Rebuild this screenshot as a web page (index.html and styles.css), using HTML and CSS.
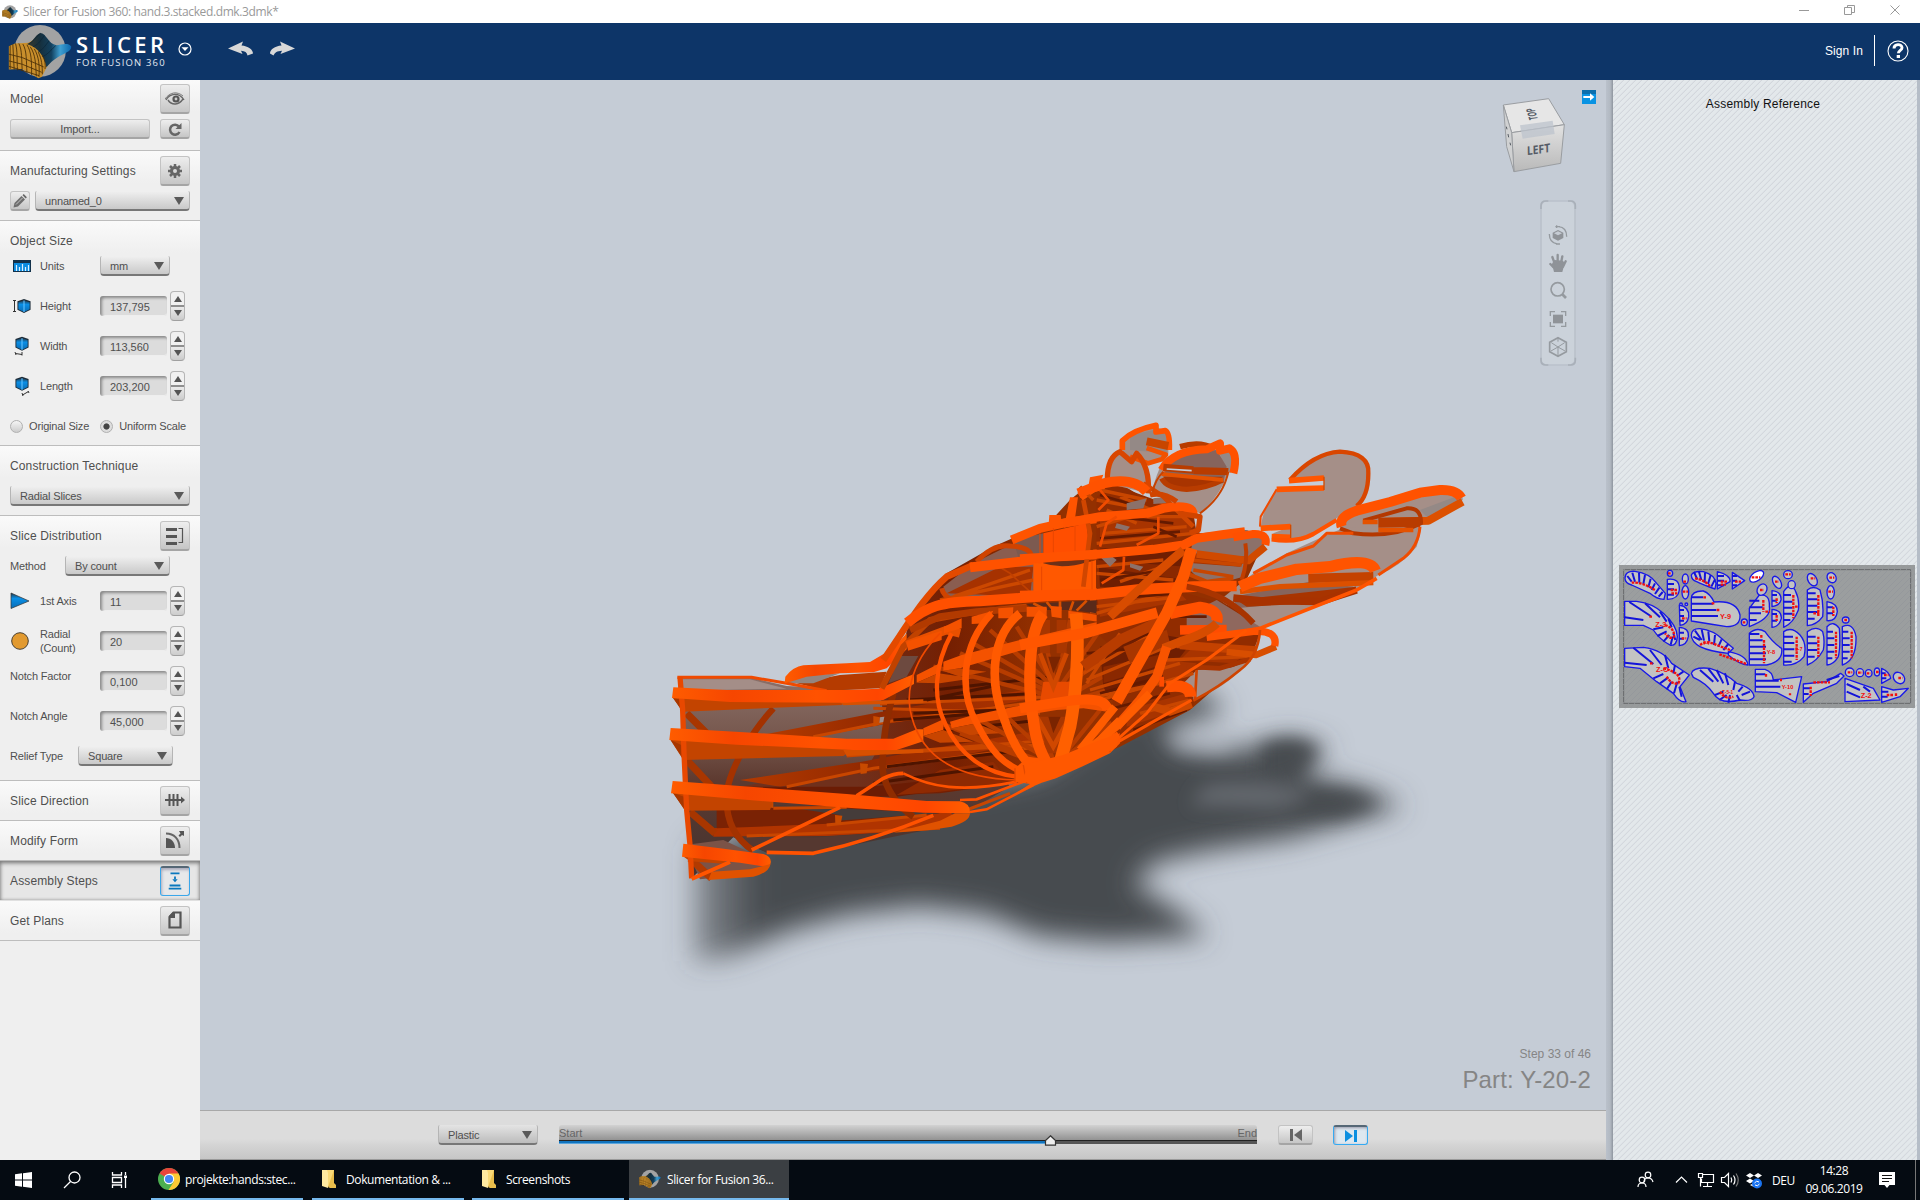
FILE: index.html
```html
<!DOCTYPE html>
<html lang="en">
<head>
<meta charset="utf-8">
<title>Slicer for Fusion 360</title>
<link rel="stylesheet" href="styles.css">
</head>
<body>
<svg width="0" height="0" class="defs">
  <defs>
    <linearGradient id="wave" x1="0" x2="1" y1="0" y2="0"><stop offset="0" stop-color="#3a3a2c"/><stop offset=".3" stop-color="#16303e"/><stop offset=".55" stop-color="#12405e"/><stop offset=".75" stop-color="#3f9fd0"/><stop offset="1" stop-color="#0b67ad"/></linearGradient>
    <linearGradient id="blue" x1="0" x2="0" y1="0" y2="1"><stop offset="0" stop-color="#22384a"/><stop offset=".35" stop-color="#0a8fe6"/><stop offset="1" stop-color="#0a6cb4"/></linearGradient>
    <symbol id="logo" viewBox="0 0 190 164">
      <circle cx="95" cy="80" r="77" fill="#a3a3a3"/>
      <path d="M2 66 20 58 60 56 88 40 118 62 140 90 118 124 100 158 90 162 70 150 42 134 2 136Z" fill="#c98f2c"/>
      <path d="M56 60C74 56 80 32 96 27c18 0 24 34 48 36 14 0 34-10 44 4 2 14-20 20-40 32-14 8-24 18-34 30-4-24-20-58-58-69Z" fill="url(#wave)"/>
      <path d="M6 64v70M14 60l4 76M22 58c6 20 4 50 6 80M32 58c10 20 8 50 10 82M44 60c12 20 10 50 12 86M56 62c14 22 14 50 14 90M66 68c16 24 16 50 18 88M78 74c14 24 16 50 14 84M90 84c10 20 12 40 12 66M102 92c8 14 10 30 8 42M2 90l40 10 64 28M2 110l40 10 58 24M2 126l90 28" fill="none" stroke="#4c3008" stroke-width="2.600"/>
      <path d="M60 60c16-8 22-20 36-32M74 68c14-6 20-14 34-34M90 82c14-6 20-16 32-32M102 98c14-6 24-18 40-34" fill="none" stroke="#0a2436" stroke-width="2"/>
    </symbol>
    <symbol id="folder" viewBox="0 0 16 20"><path d="M1 1h12v16H1z" fill="#f9d978"/><path d="M13 1v13l2 2v3H9l-2-1z" fill="#e9bd4c"/><path d="M1 1h5l1 3v15l-6-2z" fill="#ffe9a0"/></symbol>
    <symbol id="cube" viewBox="0 0 16 16"><path d="M1 3 8 .5 15 3v9l-7 3.500L1 12z" fill="#1d2c38"/><path d="M2 4l6-2 6 2v7.500L8 14.500 2 11.500z" fill="url(#blue)"/><path d="M8 2v12.500" stroke="#5fc0ff" stroke-width="1.200"/></symbol>
  </defs>
</svg>

<div class="titlebar">
  <svg class="tb-logo" viewBox="0 0 190 164"><use href="#logo"/></svg>
  <span class="tb-title">Slicer for Fusion 360: hand.3.stacked.dmk.3dmk*</span>
  <svg class="tb-ctl" viewBox="0 0 130 23"><g fill="none" stroke="#999"><path d="M9 10.500h10M54.500 7.500h7v7h-7zM57.500 7.500v-2h7v7h-3M100.500 5.500l9 9M109.500 5.500l-9 9"/></g></svg>
</div>

<header class="header">
  <svg class="logo" viewBox="0 0 190 164"><use href="#logo"/></svg>
  <div class="brand"><b>SLICER</b><span>FOR FUSION 360</span></div>
  <svg class="h-drop" viewBox="0 0 14 14"><circle cx="7" cy="7" r="6" fill="none" stroke="#fff" stroke-width="1.200"/><path d="M3.500 5.200h7L7 9z" fill="#fff"/></svg>
  <svg class="h-undo" viewBox="0 0 68 16"><path d="M0 7.500 15 .5 13.500 4.500C20 5 25 8.500 25 12.500L19.500 14.500C19 11.500 17 10 13 9.800L14.500 13z" fill="#d8d8d8"/><path d="M67 7.500 52 .5 53.500 4.500C47 5 42 8.500 42 12.500L45.500 14.500C47 11.500 49 10 54 9.800L52.500 13z" fill="#d8d8d8"/></svg>
  <div class="h-right"><span>Sign In</span><i></i>
    <svg width="22" height="22" viewBox="0 0 22 22"><circle cx="11" cy="11" r="10" fill="none" stroke="#fff" stroke-width="1.100"/><path d="M7 8.500c0-5 8-5 8-.700 0 2.600-3.600 2.600-3.600 5.400" fill="none" stroke="#fff" stroke-width="2.900"/><path d="M9.700 15h3.300v3H9.700z" fill="#fff"/></svg>
  </div>
</header>

<main class="main">
<aside class="side">
  <section class="sec s-model">
    <div class="head"><h2>Model</h2><button class="ib"><svg viewBox="0 0 20 14"><path d="M1 8C5 1 14 0 19 8M3 8c4 6 11 5 15-1" fill="none" stroke="#666" stroke-width="1.400"/><circle cx="11" cy="7" r="3.600" fill="#555"/><circle cx="11" cy="7" r="1.400" fill="#ccc"/><path d="M0 7C5 0 12-1 18 4" fill="none" stroke="#777"/></svg></button></div>
    <div class="line"><button class="btn wide">Import...</button><button class="ib low"><svg viewBox="0 0 20 14"><path d="M14 4.500A5 5 0 1 0 14.500 10" fill="none" stroke="#666" stroke-width="2.500"/><path d="M16.500 1v6h-6z" fill="#666"/></svg></button></div>
  </section>
  <section class="sec s-manu">
    <div class="head"><h2>Manufacturing Settings</h2><button class="ib"><svg viewBox="0 0 20 16"><circle cx="10" cy="8" r="3.500" fill="none" stroke="#666" stroke-width="3"/><path d="M10 1v3M10 12v3M3 8h3M14 8h3M5 3l2 2M13 11l2 2M15 3l-2 2M7 11l-2 2" stroke="#666" stroke-width="2.500"/></svg></button></div>
    <div class="line"><button class="ib sq"><svg viewBox="0 0 14 14"><path d="M.5 13.500l1-4.500 7-7 3.500 3.500-7 7z" fill="#6e6e6e"/><path d="M9.500 1.300l1.200-1.200 3.200 3.200-1.200 1.200z" fill="#666"/><path d="M3 10.500l6.500-6.500" stroke="#ccc" stroke-width=".9"/></svg></button><div class="select s155">unnamed_0</div></div>
  </section>
  <section class="sec s-size">
    <div class="head"><h2>Object Size</h2></div>
    <div class="units"><svg class="fi" viewBox="0 0 18 12"><path d="M0 0h18v12H0z" fill="#12314a"/><path d="M1 3h16v8H1z" fill="#0a8be0"/><path d="M3.500 5v6M6.500 7v4M9.500 4v7M12.500 7v4M15.500 5v6" stroke="#d9f0ff" stroke-width="1.200"/></svg><label>Units</label><div class="select s70">mm</div></div>
    <div class="field"><svg class="fi" viewBox="0 0 18 16"><path d="M0 2.500h3M0 13.500h3M1.500 2.500v11" stroke="#333" fill="none"/><use href="#cube" x="3.500" y="0" width="15" height="16"/></svg><label>Height</label><div class="input">137,795</div><div class="spin"><i></i><b></b></div></div>
    <div class="field"><svg class="fi tall" viewBox="0 0 18 20"><use href="#cube" x="1.500" y="0" width="15" height="15.500"/><path d="M2 16l1 3M9 16v3.500M2.500 17.500l6.500 1" stroke="#333" fill="none"/></svg><label>Width</label><div class="input">113,560</div><div class="spin"><i></i><b></b></div></div>
    <div class="field"><svg class="fi tall" viewBox="0 0 18 20"><use href="#cube" x="1.500" y="0" width="15" height="15.500"/><path d="M9 17l1 3M15 15l1 2M9.500 19l6-3.500" stroke="#333" fill="none"/></svg><label>Length</label><div class="input">203,200</div><div class="spin"><i></i><b></b></div></div>
    <div class="radios"><span class="radio"></span><label>Original Size</label><span class="radio on"></span><label>Uniform Scale</label></div>
  </section>
  <section class="sec s-tech">
    <div class="head"><h2>Construction Technique</h2></div>
    <div class="line"><div class="select s180">Radial Slices</div></div>
  </section>
  <section class="sec s-dist">
    <div class="head"><h2>Slice Distribution</h2><button class="ib"><svg viewBox="0 0 20 18"><path d="M1 2.500h11M1 9.500h11M1 16.500h11" stroke="#555" stroke-width="3"/><path d="M13.500 1.500h4v14h-4" fill="none" stroke="#555" stroke-width="1.200"/></svg></button></div>
    <div class="line method"><label>Method</label><div class="select s105">By count</div></div>
    <div class="field first"><svg class="fi axis" viewBox="0 0 20 16"><path d="M1 0l18 8L1 15.500z" fill="url(#blue)" stroke="#333" stroke-width=".7"/></svg><label>1st Axis</label><div class="input">11</div><div class="spin"><i></i><b></b></div></div>
    <div class="field"><svg class="fi axis" viewBox="0 0 18 18"><circle cx="9" cy="9" r="8.300" fill="#e29a30" stroke="#4a4030" stroke-width="1"/></svg><label>Radial<br>(Count)</label><div class="input">20</div><div class="spin"><i></i><b></b></div></div>
    <div class="field plain"><label>Notch Factor</label><div class="input">0,100</div><div class="spin"><i></i><b></b></div></div>
    <div class="field plain"><label>Notch Angle</label><div class="input">45,000</div><div class="spin"><i></i><b></b></div></div>
    <div class="relief"><label>Relief Type</label><div class="select s95">Square</div></div>
  </section>
  <section class="sec nav"><h2>Slice Direction</h2><button class="ib"><svg viewBox="0 0 20 14"><path d="M0 7h17" stroke="#555" stroke-width="2"/><path d="M4.500 1v12M8.500 1v12M12.500 1v12" stroke="#555" stroke-width="2"/><path d="M16 3.500 20 7l-4 3.500z" fill="#555"/></svg></button></section>
  <section class="sec nav"><h2>Modify Form</h2><button class="ib"><svg viewBox="0 0 20 18"><path d="M1 7c5 0 9 4 9 10H1z" fill="#555"/><path d="M1 2.500C9 2.500 14.500 8 14.500 17" fill="none" stroke="#666" stroke-width="2"/><path d="M14 0h5v5l-2-1-2 2-1.500-1.500 2-2z" fill="#555"/></svg></button></section>
  <section class="sec nav on"><h2>Assembly Steps</h2><button class="ib"><svg viewBox="0 0 20 20"><path d="M5 1.500h10M4 15h12M3 18.500h14" stroke="#0b78bd" stroke-width="2"/><path d="M10 5v3" stroke="#0b78bd" stroke-width="2"/><path d="M7 8h6l-3 3.500z" fill="#0b78bd"/></svg></button></section>
  <section class="sec nav"><h2>Get Plans</h2><button class="ib"><svg viewBox="0 0 20 18"><path d="M4.500 6 8.500 1.500h7v15h-11z" fill="none" stroke="#555" stroke-width="2.200"/><path d="M4 7V5l4-4h2v6z" fill="#555"/></svg></button></section>
</aside>

<div class="work">
<div class="view">
<svg class="scene" viewBox="200 80 1406 1030">
  <defs>
    <filter id="b1" x="-20%" y="-20%" width="140%" height="140%"><feGaussianBlur stdDeviation="14"/></filter>
    <filter id="b2" x="-50%" y="-50%" width="200%" height="200%"><feGaussianBlur stdDeviation="9"/></filter>
    <linearGradient id="sh" x1="690" y1="0" x2="760" y2="0" gradientUnits="userSpaceOnUse"><stop offset="0" stop-color="#474b4f" stop-opacity=".45"/><stop offset="1" stop-color="#474b4f"/></linearGradient>
    <linearGradient id="arm" x1="0" y1="830" x2="0" y2="1350" gradientUnits="userSpaceOnUse"><stop offset="0" stop-color="#8b7069"/><stop offset=".35" stop-color="#76574d"/><stop offset=".6" stop-color="#5d3a30"/><stop offset="1" stop-color="#4a3530"/></linearGradient>
    <linearGradient id="inner" x1="650" y1="0" x2="1200" y2="0" gradientUnits="userSpaceOnUse"><stop offset="0" stop-color="#70301c"/><stop offset=".5" stop-color="#741f02"/><stop offset="1" stop-color="#933000"/></linearGradient>
    <linearGradient id="slab" x1="0" x2="1" y1="0" y2="0"><stop offset="0" stop-color="#b43a00"/><stop offset=".4" stop-color="#922900"/><stop offset="1" stop-color="#b03400"/></linearGradient>
    <linearGradient id="band" x1="0" x2="1" y1="0" y2="0"><stop offset="0" stop-color="#ff5c00"/><stop offset=".25" stop-color="#f64600"/><stop offset=".6" stop-color="#ff5200"/><stop offset=".85" stop-color="#ff4600"/><stop offset="1" stop-color="#ff5f00"/></linearGradient>
    <linearGradient id="cf" x1="0" x2="0" y1="0" y2="1"><stop offset="0" stop-color="#e2e2e2"/><stop offset="1" stop-color="#b9b9b9"/></linearGradient>
  </defs>
  <!-- ground shadow -->
  <g filter="url(#b1)">
    <path d="M694 850 694 962 730 956 790 930 850 914 920 906 985 914 1040 936 1110 942 1208 936 1168 904 1134 884 1156 862 1210 850 1290 838 1404 806 1354 786 1310 778 1308 762 1330 750 1290 738 1240 750 1190 748 1160 728 1226 712 1200 690 1140 700 1040 770 700 840Z" fill="url(#sh)"/>
    <path d="M760 840 756 916 850 898 985 898 1110 920 1100 780 800 790Z" fill="#474b4f"/>
  </g>
  <g filter="url(#b2)"><path d="M1205 785q50-8 110 8l-40 16-85-4z" fill="#777c82" opacity=".6"/><path d="M1165 736q40-8 70 4l-10 14-50-2z" fill="#c5ccd6" opacity=".45"/><path d="M1262 746q34-12 58 4l-22 22-36 8z" fill="#474b4f"/><path d="M1310 792q40-4 70 12l-40 12-60-6z" fill="#474b4f"/></g>

  <g transform="translate(640 400) scale(.33333)">
    <!-- forearm faces -->
    <path d="M115 832 330 832 440 858 720 872 780 765 900 800 1000 1000 1110 1160 990 1230 860 1290 640 1335 520 1360 380 1358 280 1312 160 1430 130 1000Z" fill="url(#arm)"/>
    <path d="M125 838 330 838 440 866 110 872Z" fill="#a48e88"/>
    <path d="M135 1335 250 1320 390 1385 360 1420 180 1438Z" fill="#7b5347"/>
    <!-- body interior -->
    <path d="M720 880 780 780 810 650 920 520 1060 440 1230 365 1290 300 1370 235 1440 250 1520 300 1620 340 1680 400 1820 390 1870 430 1810 560 1850 680 1800 800 1650 930 1440 1040 1240 1130 1120 1150 900 1180 640 1190 300 1160 690 1090 740 1000Z" fill="url(#inner)"/>
    <path d="M910 560 1000 490 1100 440 1200 450 1180 580 1000 600 920 590Z" fill="#8a5d50"/>
    <path d="M1120 420 1210 400 1210 480 1140 490Z" fill="#7c5a50"/>
    <path d="M920 580 1080 500 1180 500 1170 590Z" fill="#a63200"/><path d="M940 590 1170 510M900 600 1180 540" stroke="#cc4800" stroke-width="10"/>
    <!-- interior slabs of the forearm -->
    <path d="M380 1002 710 938 900 905 1240 860 1240 885 880 950 720 975 520 1012Z" fill="url(#slab)"/>
    <path d="M300 1140 665 1085 880 1045 1240 985 1240 1010 900 1080 670 1118 420 1160Z" fill="url(#slab)"/>
    <path d="M230 1160 690 1160 1080 1120 1050 1150 770 1190 420 1190Z" fill="#6b1c04"/>
    <path d="M770 1185 900 1110 1060 1085 1110 1150 900 1175Z" fill="#8f2a02"/>
    <path d="M220 1285 590 1250 930 1235 960 1270 870 1290 560 1308 220 1310Z" fill="#b03400"/>
    <path d="M300 1310 530 1312 760 1296 620 1335 500 1358 380 1356 310 1330Z" fill="#553830"/>
    <path d="M230 1230 590 1215 900 1240 600 1270 230 1285Z" fill="#7a2204"/>
    <path d="M400 1215 900 1240 590 1262 600 1245Z" fill="#453c3a"/>
    <g fill="none" stroke="#c84600" stroke-width="9"><path d="M720 912 1240 890M700 925 1200 940M520 1010 740 965 1240 900M620 1068 1240 1020M680 1062 1200 1035M440 1160 700 1105 1200 1040M400 1225 620 1222M560 1275 860 1245M320 1308 900 1285M980 1230 1110 1180"/></g>
    <g fill="none" stroke="#4e1400" stroke-width="9"><path d="M800 900 1200 880M820 940 1240 925M760 960 1100 935M840 1000 1200 960M740 1100 1150 1050M700 1150 1060 1100M880 870 1240 830M860 900 1100 850"/></g>
    <path d="M388 1200h12v24l-16-2zM585 1245l22 2-5 26-16-2zM660 1090l24 2-4 28-18 2zM700 948l20 4-2 22-18 6z" fill="#c84a00"/>
    <path d="M720 952l28-4-4 16-26 4z" fill="#a18e8a"/><path d="M780 768 835 768 800 830 745 850Z" fill="#6d4a40"/>
    <!-- curved dark ribs behind -->
    <g fill="none"><path d="M400 925C340 990 270 1100 260 1180 255 1270 290 1320 340 1352" stroke="#a33200" stroke-width="19"/><path d="M760 880C740 950 725 1020 728 1110 735 1170 780 1225 820 1250" stroke="#8f2c00" stroke-width="20"/>
    <path d="M140 940 205 1005M140 1080 215 1160M150 1235 225 1300" stroke="#a83600" stroke-width="22"/><path d="M150 1375 215 1435" stroke="#b23a00" stroke-width="22"/></g>
    <!-- wedges below the bands -->
    <g fill="#c34400"><path d="M98 893 620 900 605 915 130 935ZM90 1018 640 1048 610 1068 130 1080ZM98 1176 400 1202 390 1230 135 1232ZM128 1368 250 1378 260 1392 150 1384Z"/></g>
    <g fill="#a73700"><path d="M100 895 128 900 120 925ZM92 1020 135 1040 130 1078ZM98 1178 145 1195 135 1230Z"/></g>
    <path d="M600 905 850 898 850 908 610 916ZM610 1050 850 1048 850 1058 620 1068Z" fill="#d85000"/>
    <path d="M470 850 600 825 740 815 720 865 560 872Z" fill="#b53b00"/><path d="M440 830 600 820 520 850 440 850Z" fill="#93857f"/>
    <path d="M112 832 290 832 335 832 440 850 560 872" fill="none" stroke="#f04a00" stroke-width="9"/>
    <path d="M120 832 128 930 132 1060 140 1230 150 1335 155 1435" fill="none" stroke="#e84800" stroke-width="16"/>
    <!-- forearm bands -->
    <g fill="url(#band)">
      <path d="M100 862 260 870 620 870 715 866 822 822 822 852 730 900 620 908 270 906 96 894Z"/>
      <path d="M92 984 300 996 620 1016 760 1016 830 988 850 988 850 1024 770 1050 640 1050 290 1034 88 1020Z"/>
      <path d="M98 1143 300 1158 620 1182 860 1203 960 1204Q992 1210 990 1240L978 1240 850 1238 600 1222 300 1198 93 1180Z"/>
      <path d="M130 1331 240 1345 370 1362Q396 1370 392 1390L385 1402 300 1388 126 1370Z"/>
      <path d="M434 850 436 830Q460 800 490 796L620 790 690 786 760 745 800 700 800 748 740 805 700 817 600 820 500 830Q460 842 434 850Z"/>
    </g>
    <path d="M990 1240Q990 1265 935 1280L870 1290 760 1298 900 1262 945 1240ZM392 1392Q385 1420 340 1430L205 1440 215 1415 330 1408Z" fill="#e05200"/>
    <path d="M155 1437 270 1386" stroke="#ff5500" stroke-width="12"/>
    <g fill="none" stroke="#ff5200" stroke-width="11"><path d="M335 1350 600 1222M650 1187 730 1135Q760 1120 790 1120"/><path d="M380 1357 520 1360Q700 1320 880 1246"/><path d="M790 1120C870 1160 960 1180 1130 1145M960 1200 1010 1198 1150 1145M990 1236 1040 1228 1180 1155" stroke-width="8"/></g>
    <!-- upper back of the hand -->
    <g fill="none" stroke-linejoin="round">
      <path d="M725 865 790 740 870 660 980 640 1160 620" stroke="#c04200" stroke-width="18"/>
      <path d="M730 780C800 680 850 590 920 530L1000 495" stroke="#e34a00" stroke-width="20"/>
      <path d="M1010 485Q1060 430 1110 438 1180 440 1175 480M905 565Q910 590 940 600" stroke="#cf4300" stroke-width="15"/>
      <path d="M1060 490 1110 520 1170 575" stroke="#c04000" stroke-width="5"/>
      <path d="M810 690 900 650 1010 635 1160 625" stroke="#b23a00" stroke-width="20"/>
      <path d="M800 735 920 690 960 700" stroke="#e85000" stroke-width="26"/>
      <path d="M802 668C860 620 900 605 1020 603L1200 590 1440 575" stroke="#ff5000" stroke-width="31"/>
      <path d="M990 502 1140 485 1240 470 1360 464 1440 458" stroke="#ff5200" stroke-width="29"/>
      <path d="M1115 420 1200 385 1290 365 1440 348" stroke="#ff5400" stroke-width="27"/>
      <path d="M1320 290 1360 262 1440 245" stroke="#ff5600" stroke-width="28"/>
    </g>
    <!-- centre boxes -->
    <path d="M1210 400 1340 370 1350 470 1210 475Z" fill="#ff4e00"/><path d="M1180 490 1350 485 1368 480 1368 640 1350 640 1350 580 1180 585Z" fill="#ff5800"/><path d="M1210 490Q1270 510 1345 485L1345 480 1210 488Z" fill="#6b3018"/>
    <path d="M1228 345h34l4 30h-40zM1290 292h24l-10 70h-28zM1350 232l40-8-10 26-34 4z" fill="#ff5400"/>
    <path d="M1200 400v75M1240 385v85M1305 376v90M1205 500v72M1356 482v90" stroke="#e84600" stroke-width="3"/>
    <path d="M1160 612 1380 600 1370 640 1290 630 1180 630Z" fill="#5a2a1a"/><path d="M1180 610l40 20M1220 606l20 24M1260 604v28M1300 604l-10 28M1340 602l-30 30" stroke="#d85000" stroke-width="8"/>
    <!-- lower palm fan -->
    <g stroke="#b63c00" stroke-width="13" fill="none"><path d="M1000 730 1240 870M960 760 1240 880M880 800 1240 890M1050 690 1240 860M1130 680 1240 850M1200 660 1245 850M1290 660 1250 850M1380 690 1260 860M1440 740 1260 870M900 970 1220 1090M960 1000 1220 1100M1020 960 1230 1080M1100 950 1240 1080M1180 930 1240 1080M1300 930 1250 1080M1380 930 1260 1080M1440 800 1300 880M1440 860 1300 900M1440 950 1290 1060"/></g>
    <path d="M1210 845 1290 845 1300 900 1200 905Z" fill="#e84a00"/><path d="M1200 660h30v100h-30zM1250 660h30v100h-30zM1200 950h90l-20 110h-50z" fill="#a83600"/><path d="M1200 760 1240 860 1280 760M1190 950 1240 1040 1290 950" fill="none" stroke="#d04800" stroke-width="14"/><path d="M1225 770 1240 820 1262 770ZM1225 950 1240 1000 1262 950Z" fill="#7a2400"/>
    <g fill="#f45200"><path d="M912 680 965 655 965 685 912 700ZM995 650 1060 632 1040 670 995 672ZM1075 625 1120 622 1118 655 1075 655ZM1160 620 1220 620 1220 650 1160 650ZM1232 618 1265 620 1265 655 1235 650ZM1285 632 1340 640 1375 645 1375 665 1320 658 1285 655ZM800 725 905 692 905 720 804 752ZM830 825 895 792 895 820 830 848ZM910 785 965 765 1140 720 1440 650 1440 685 1140 752 960 805 910 812ZM850 985 910 958 910 990 850 1008ZM930 965 1000 945 1250 895 1350 887Q1410 895 1402 935L1330 925 1250 930 1010 970 935 985Z"/></g>
    <g fill="#c84500"><path d="M830 848 895 820 1000 835 900 850ZM910 812 960 805 1040 815 960 830ZM850 1008 910 990 1000 1025 900 1028ZM935 985 1010 970 1080 1000 990 1005Z"/></g>
    <!-- globe ribs -->
    <g fill="none">
      <path d="M900 700C800 800 800 900 815 950 850 1080 960 1135 1130 1140" stroke="#f04a00" stroke-width="5"/>
      <path d="M935 700C880 800 880 900 915 970 960 1070 1040 1120 1130 1130" stroke="#ff5200" stroke-width="13"/>
      <path d="M1055 640C960 740 960 880 1010 970 1050 1050 1090 1095 1150 1115" stroke="#ff5600" stroke-width="20"/>
      <path d="M1140 640C1050 710 1050 850 1090 950 1120 1040 1150 1080 1180 1105" stroke="#ff5a00" stroke-width="26"/>
      <path d="M1210 640C1160 700 1165 880 1180 960 1190 1040 1210 1070 1225 1100" stroke="#ff5800" stroke-width="34"/>
      <path d="M1308 640C1320 760 1305 900 1290 980L1262 1080" stroke="#ff6000" stroke-width="38"/>
    </g>
    <path d="M1125 1105 1165 1070 1250 1082 1310 1062 1440 990 1440 1030 1410 1060 1330 1098 1248 1135 1205 1148 1120 1185 1170 1152 1125 1145Z" fill="#ff5800"/>
    <path d="M1125 1105v40M1150 1095l10 55M1310 1080v20M1345 1065v20M1378 1050v22M1410 1035v22" stroke="#e34a00" stroke-width="4"/>
  </g>

  <g transform="translate(1020 400) scale(.33333)">
    <!-- finger faces -->
    <g fill="#a58f88">
      <path d="M305 130Q340 90 405 80L445 95 445 160 390 190 310 165ZM270 230Q270 170 300 155L350 165Q390 210 385 280L260 250ZM395 275Q410 220 430 180 480 140 580 150 650 170 625 215 600 290 540 340L440 300Z"/>
      <path d="M722 380Q730 320 770 268L912 270V230L810 245Q870 170 960 150 1050 160 1048 230 1035 310 1010 320L950 355 880 405Q830 430 760 420V400L810 380Z"/>
      <path d="M700 520 800 460 920 405 1030 360 1190 320Q1210 380 1190 440 1140 500 1075 525L1010 570 800 650 720 685 600 600Z"/>
      <path d="M1010 330 1270 262Q1330 270 1328 300L1225 370 960 385ZM500 900 520 780 690 700 720 700Q715 760 670 800 620 860 520 900Z"/>
      <path d="M520 420 680 390 735 410 730 450 680 490 670 530 560 560 500 500Z" fill="#8c716a"/>
    </g>
    <path d="M330 105 400 90 440 100 440 160 330 150ZM1200 330 1320 285 1325 310 1230 360ZM600 160 648 150 650 190 630 220 610 190Z" fill="#948986"/>
    <path d="M440 190 500 155 590 150 620 200 610 250 430 230ZM640 590 870 545 1000 560 900 600 650 625Z" fill="#86645c"/>
    <path d="M720 380 722 350 770 268" fill="none" stroke="#f04a00" stroke-width="6"/>
    <!-- knuckle interior -->
    <path d="M230 290 270 250 380 290 520 340 530 400 490 470 500 580 640 620 720 700 690 780 520 850 520 920 300 1010 270 960 300 760 230 700Z" fill="#912c00"/>
    <path d="M235 470 480 450 510 570 240 560ZM240 740 400 700 520 720 420 850 270 900 250 860Z" fill="#6f1e02"/>
    <path d="M500 645 590 600 720 680 640 700 500 690Z" fill="#8f685e"/><path d="M470 870 530 810 670 800 530 895Z" fill="#a58f88"/>
    <g fill="#a83400"><path d="M520 460 685 470 660 500 520 490ZM520 740 710 740 640 790 480 780ZM430 230 610 230 540 270 450 265ZM650 600 1010 560 880 610 680 620ZM240 360 500 350 520 400 240 430ZM230 580 480 580 500 600 240 650ZM430 780 530 790 500 830 420 840ZM320 930 500 880 510 920 320 980Z"/></g>
    <path d="M230 480 500 500 500 540 230 500ZM250 800 440 760 440 790 250 850Z" fill="#8a2800"/>
    <g stroke="#c84600" stroke-width="10" fill="none"><path d="M240 270 380 300M230 300 390 330M250 400 500 380M230 430 520 400M260 330 350 370M300 290 420 340M230 500 430 480M230 520 460 540M230 640 500 560M230 620 480 590M190 820 400 700M200 840 440 740M210 870 480 790M240 900 520 820M200 850 300 700M180 900 420 850M440 780 690 770M470 740 700 745M510 480 665 495M520 510 640 530M180 260 220 300M360 940 510 900M230 380 330 350M380 350 500 350M400 300 470 320M300 545 430 500"/></g>
    <g stroke="#641a00" stroke-width="8" fill="none"><path d="M240 285 360 320M240 415 480 395M240 450 430 440M240 540 430 510M200 760 400 740M240 880 430 830M260 930 450 880M290 350 460 370M300 730 420 690M450 650 560 650M400 380 470 410M350 590 470 580M340 990 500 930"/></g>
    <g fill="#8c716a"><path d="M320 310 380 295 370 325 320 330ZM250 450 290 480 270 500 240 470ZM330 490 370 500 360 512 330 502ZM400 295 440 290 450 308 400 312ZM290 370 330 380 320 392 285 384Z"/></g>
    <path d="M190 300 210 400 190 560M370 250 430 290 520 380" stroke="#d04600" stroke-width="14" fill="none"/>
    <!-- small finger rings -->
    <g fill="none" stroke-linejoin="round">
      <path d="M307 150V122Q340 90 408 76V96L436 92Q450 98 448 150" stroke="#ff5400" stroke-width="17"/>
      <path d="M380 124 445 138" stroke="#c84600" stroke-width="24"/>
      <path d="M380 144 438 164 425 178 385 190 330 170" stroke="#f25200" stroke-width="14"/>
      <path d="M262 240Q262 170 300 155L335 185 350 160Q390 200 385 280" stroke="#d94600" stroke-width="16"/>
      <path d="M480 140Q540 122 580 145M425 235Q440 265 500 268 560 265 608 240" stroke="#b83c00" stroke-width="16"/>
      <path d="M425 210Q460 150 560 148L600 130 600 152 628 145Q655 160 640 220" stroke="#ff5200" stroke-width="24"/>
      <path d="M430 202 520 210M520 212 625 215" stroke="#b83c00" stroke-width="22"/>
      <path d="M440 207 515 212" stroke="#c5ccd6" stroke-width="5"/>
      <path d="M425 222 610 240" stroke="#e45200" stroke-width="12"/>
      <path d="M398 275Q405 240 430 215M625 215Q610 290 540 340" stroke="#c84200" stroke-width="6"/>
      <path d="M175 280 250 250Q340 230 380 275" stroke="#ff5200" stroke-width="30"/>
      <path d="M130 370 240 350 380 340 430 325Q520 310 520 345" stroke="#ff5200" stroke-width="27"/>
      <path d="M390 285Q430 275 470 305M475 340 540 350 535 390 510 400" stroke="#d04400" stroke-width="16"/>
      <path d="M0 476 240 462 400 448 490 435 530 415 600 405 675 395" stroke="#ff5200" stroke-width="27"/>
      <path d="M640 412 700 402Q745 400 736 435" stroke="#ff5000" stroke-width="24"/>
      <path d="M736 440 685 482 530 462" stroke="#d04a00" stroke-width="22"/>
      <path d="M676 430Q685 480 665 540" stroke="#c03e00" stroke-width="12"/>
      <path d="M640 535 560 545 500 520" stroke="#c84600" stroke-width="12"/>
      <path d="M0 588 230 583 360 568 520 560 650 558" stroke="#ff5200" stroke-width="32"/>
      <path d="M640 594 720 602 900 605 1010 570" stroke="#a83200" stroke-width="22"/>
      <path d="M865 535 1060 530" stroke="#c44200" stroke-width="28"/><path d="M660 575 780 560 1060 548" stroke="#dc5000" stroke-width="16"/>
      <path d="M660 560 720 535 830 508 930 500Q1050 470 1066 512" stroke="#ff5400" stroke-width="34"/>
      <path d="M1070 535 1010 570 720 685 640 700" stroke="#ff5400" stroke-width="11"/>
      <path d="M810 240Q880 160 960 155 1050 160 1045 220 1045 290 1010 318" stroke="#d94600" stroke-width="13"/>
      <path d="M807 242 912 234M770 268 912 264M722 385 812 380M755 410 812 412" stroke="#ff5600" stroke-width="17"/>
      <path d="M912 230v40M812 374v40" stroke="#d04a00" stroke-width="4"/>
      <path d="M755 418Q830 430 880 402L950 360" stroke="#ff5200" stroke-width="13"/>
      <path d="M1328 305 1225 362 1080 366" stroke="#dc5000" stroke-width="24"/>
      <path d="M965 380Q955 350 1010 332L1110 306 1200 278 1260 270Q1310 268 1324 294" stroke="#ff5200" stroke-width="30"/>
      <path d="M1030 362 1160 325Q1205 322 1203 370 1120 415 1000 400L960 385" stroke="#b43800" stroke-width="12"/>
      <path d="M1075 368 1200 366" stroke="#b83c00" stroke-width="30"/><path d="M1075 390 1180 390M1028 366h45" stroke="#e45200" stroke-width="13"/>
      <path d="M1200 380Q1195 440 1150 475L1075 525M1000 400 920 400 880 438 800 465 700 520" stroke="#f04c00" stroke-width="9"/>
      <path d="M500 560Q620 580 700 670" stroke="#a83400" stroke-width="18"/>
      <path d="M480 690 620 688" stroke="#ff4c00" stroke-width="28"/>
      <path d="M480 735 710 752" stroke="#c44200" stroke-width="26"/>
      <path d="M768 740 708 765 620 756" stroke="#d84e00" stroke-width="20"/>
      <path d="M560 712 700 694Q775 690 764 738" stroke="#ff5200" stroke-width="22"/>
      <path d="M500 800 600 805 690 778" stroke="#a83400" stroke-width="14"/>
      <path d="M530 810 525 900M720 690Q715 770 660 810 600 860 520 902" stroke="#d04400" stroke-width="8"/>
      <path d="M440 860Q510 850 512 890" stroke="#ff5200" stroke-width="34"/><path d="M515 912 450 935 400 920" stroke="#cc4800" stroke-width="24"/>
    </g>
    <!-- palm ribs, right half -->
    <g fill="none" stroke-linejoin="round">
      <path d="M240 270 265 300 235 330M240 440 260 370 290 350M350 435 415 400 415 350M245 550 310 510 312 470" stroke="#f04c00" stroke-width="8"/>
      <path d="M270 650 420 510 490 450" stroke="#d84c00" stroke-width="26"/>
      <path d="M190 800 300 720 430 660" stroke="#b83c00" stroke-width="32"/>
      <path d="M310 740 440 690 450 730 330 790" fill="#a83600"/>
      <path d="M450 640 540 622Q600 630 590 665" stroke="#ff5000" stroke-width="34"/>
      <path d="M590 670Q560 700 480 725L430 745" stroke="#d64c00" stroke-width="26"/>
      <path d="M0 735 200 698 412 638" stroke="#ff5600" stroke-width="32"/>
      <path d="M515 445 490 530 440 640 290 905" stroke="#ff5800" stroke-width="34"/>
      <path d="M440 740 410 830 360 900 290 980" stroke="#f85400" stroke-width="28"/>
      <path d="M0 925 130 905Q260 885 262 930" stroke="#ff5600" stroke-width="30"/>
      <path d="M285 920 180 1050M300 960 200 1060M390 880 300 970 180 1070" stroke="#ff5c00" stroke-width="24"/>
      <path d="M680 690 560 780 450 850 380 940 290 1020M515 900 400 965 290 1028" stroke="#ff5600" stroke-width="9"/>
      <path d="M425 830v30" stroke="#ff4c00" stroke-width="14"/>
    </g>
    <path d="M30 1090 130 1065 240 1020 300 1000 290 1040 240 1072 180 1100 110 1118 105 1135 0 1150Z" fill="#ff5800"/>
  </g>

  <!-- view cube -->
  <g transform="translate(1480 0) scale(.33333)">
    <path d="M70 315 206 296 253 374 95 398Z" fill="#e6e6e6" stroke="#9a9da1" stroke-width="3"/>
    <path d="M95 398 253 374 242 490 102 515Z" fill="url(#cf)" stroke="#9a9da1" stroke-width="3"/>
    <path d="M70 315 95 398 102 515 80 440Z" fill="#d0d1d2" stroke="#9a9da1" stroke-width="3"/>
    <path d="M120 376 218 362 224 402 128 416Z" fill="#bcc3cc" opacity=".75"/>
    <path d="M79 380l2 8M84 402l2 10M90 428l2 8" stroke="#555b63" stroke-width="3"/>
    <text class="cubetext" transform="matrix(.97 -.14 .02 1 141 466)" textLength="72" lengthAdjust="spacingAndGlyphs" font-size="36">LEFT</text>
    <text class="cubetext" transform="matrix(-.3 -.95 1 -.12 174 358)" textLength="36" lengthAdjust="spacingAndGlyphs" font-size="36">TOP</text>
    <rect x="306" y="270" width="42" height="42" fill="#0a93e3"/><path d="M306 270h42v12h-42z" fill="#0b6fae"/><path d="M310 288h20v-8l13 11-13 11v-8h-20z" fill="#fff"/>
    <!-- navigation bar -->
    <rect x="183" y="603" width="102" height="492" rx="16" fill="#cbd2da" stroke="#bac1cb" stroke-width="5"/>
    <path d="M183 627v-10q0-14 14-14h8M264 603h8q14 0 14 14v10M183 1073v8q0 14 14 14h8M264 1095h8q14 0 14-14v-8" fill="none" stroke="#a9b0b9" stroke-width="5"/>
    <g fill="#8f9398" stroke="none">
      <path d="M218 698 234 690 250 698V714L234 722 218 714Z"/><path d="M222 700l12 6 12-6-12-6z" fill="#c6ccd4"/>
      <path d="M219 944h30v26h-30z"/><path d="M219 786 224 780 249 782 254 790 247 816H222Q221 804 214 796Z"/>
    </g>
    <path d="M211 792 221 802M217 771 224 790M233 765V788M247 769 243 790M257 784 249 800" stroke="#8f9398" stroke-width="7" stroke-linecap="round"/>
    <g fill="none" stroke="#959a9f" stroke-width="4"><path d="M236 680q24 2 24 30M232 732q-24-4-24-30M226 680h14M230 676v8M228 732h12"/><circle cx="233" cy="868" r="20" stroke-width="5"/><path d="M246 882l12 12" stroke-width="8"/><path d="M211 948v-13h14M243 935h14v13M257 966v13h-14M225 979h-14v-13"/><path d="M234 1013 259 1027V1055L234 1069 209 1055V1027Z" stroke-width="5"/><path d="M234 1013v12M234 1041v24M234 1041l-20-13M234 1041l20-13M213 1053l21-12 21 12" stroke-width="3"/></g>
  </g>
</svg>
<div class="status"><span>Step 33 of 46</span><strong>Part: Y-20-2</strong></div>
</div>
<footer class="controls">
  <div class="select s100">Plastic</div>
  <div class="track"><div class="tl"><span>Start</span><span>End</span></div><div class="rail"><i></i></div>
    <svg class="thumb" viewBox="0 0 12 11"><path d="M6 .8 11 5.500v4.700H1V5.500z" fill="#eee" stroke="#333" stroke-width="1.200"/></svg></div>
  <button class="ib low prev"><svg viewBox="0 0 14 14"><path d="M2.500 1v12" stroke="#666" stroke-width="3"/><path d="M13 1v12L5 7z" fill="#666"/></svg></button>
  <button class="ib low next"><svg viewBox="0 0 14 14"><path d="M11.500 1v12" stroke="#0b8fe0" stroke-width="3"/><path d="M1 1v12l8-6z" fill="#0b8fe0"/></svg></button>
</footer>
</div>

<div class="gutter"></div>
<aside class="ref">
  <h3>Assembly Reference</h3>
  <svg class="map" viewBox="57 75 888 429">
    <path d="M57 75h888v429H57z" fill="#979a9b"/><path d="M71 89h861v401H71z" fill="#9b9e9f" stroke="#65686a" stroke-width="3"/>
    <pattern id="hat" width="18" height="18" patternUnits="userSpaceOnUse"><path d="M0 18 18 0" stroke="#92969a" stroke-width="3"/></pattern><path d="M57 75h888v429H57z" fill="url(#hat)" opacity=".7"/>
    <g fill="#c3c3c3" stroke="#1818e8" stroke-width="4" stroke-linejoin="round">
      <path d="M75 115Q75 92 105 94 150 100 170 130L196 160 192 178Q170 178 150 160L95 135Q75 130 75 115Z"/>
      <path d="M74 184H110Q160 190 190 220 230 255 232 290 230 318 212 316 180 300 160 270L130 256H74Z"/>
      <path d="M74 325 130 322Q190 330 215 370L268 405 240 440 258 485Q240 490 220 460L170 425 120 385 74 380Z"/>
      <path d="M202 118Q240 112 238 150 235 178 202 178ZM238 195Q268 200 266 230 262 255 240 256ZM238 262Q268 264 265 290 260 316 238 317Z"/>
      <path d="M274 105Q280 92 310 95 345 105 348 130L345 147Q310 135 290 125 274 120 274 105ZM352 95Q392 105 390 125L352 147ZM397 97 434 122 397 147Z"/>
      <path d="M274 243V175Q275 152 310 153 330 160 342 186 410 180 420 225 422 260 380 260L330 252Z"/>
      <path d="M274 285Q275 265 300 266 340 270 370 300L400 325 385 340 Q330 335 300 320 274 305 274 285ZM385 335Q440 345 444 375 420 375 385 345Z"/>
      <path d="M274 400Q280 380 330 385 380 400 410 430 460 445 462 470 455 485 420 480 360 495 340 460 320 430 280 412Z"/>
      <path d="M448 260V205L478 165Q510 160 508 200 515 235 448 260ZM516 152Q545 155 543 180 538 198 516 200ZM516 208Q545 210 544 235 538 260 516 262ZM551 258V155Q570 125 585 150 600 180 595 210 580 250 551 262ZM622 255V150Q640 135 660 150 672 190 668 230 650 255 622 257ZM681 185Q712 190 712 215 708 245 681 242Z"/>
      <path d="M448 375V280Q470 260 495 275 520 310 545 325 550 365 500 375ZM551 375V275Q575 258 600 285 622 310 612 350 590 378 551 375ZM622 375V275Q650 255 668 275 675 300 670 330 650 365 622 375ZM681 375V260Q700 240 718 265 722 320 715 350 700 375 681 375ZM727 375V260Q760 245 768 290 770 360 727 375Z"/>
      <path d="M466 455V388H495Q518 395 520 420L605 410 587 487 530 458ZM610 487V432L680 425 722 400 732 408 710 430 640 460ZM735 485V415L820 445 840 480ZM845 430V385Q868 395 872 415ZM845 487V440L880 450 925 445 900 470Z"/>
      <g><ellipse cx="210" cy="100" rx="8" ry="9"/><ellipse cx="256" cy="117" rx="9" ry="15"/><ellipse cx="256" cy="157" rx="10" ry="20"/><ellipse cx="470" cy="109" rx="24" ry="13" transform="rotate(-35 470 109)" fill="#fff"/><ellipse cx="486" cy="149" rx="14" ry="18" transform="rotate(30 486 149)"/><ellipse cx="531" cy="127" rx="11" ry="20" transform="rotate(-30 531 127)"/><ellipse cx="564" cy="104" rx="13" ry="12"/><ellipse cx="637" cy="119" rx="13" ry="20" transform="rotate(-30 637 119)"/><ellipse cx="695" cy="113" rx="13" ry="16" transform="rotate(-30 695 113)"/><ellipse cx="692" cy="157" rx="11" ry="20"/><ellipse cx="575" cy="134" rx="11" ry="12"/><ellipse cx="433" cy="247" rx="9" ry="10"/><ellipse cx="737" cy="240" rx="10" ry="9"/><ellipse cx="749" cy="397" rx="13" ry="13"/><ellipse cx="780" cy="398" rx="11" ry="12"/><ellipse cx="806" cy="400" rx="10" ry="11"/><ellipse cx="831" cy="396" rx="8" ry="12"/><ellipse cx="897" cy="414" rx="15" ry="19" transform="rotate(-45 897 414)"/><circle cx="243" cy="193" r="4"/><circle cx="259" cy="193" r="4"/></g>
    </g>
    <g fill="none" stroke="#1414d8" stroke-width="6">
      <path d="M82 108 95 125M97 98 105 125M117 98 118 128M135 105 130 132M152 116 145 142M165 130 155 150M178 143 165 162M188 156 176 170M74 232 130 240M88 186 152 228M135 190 180 232M180 215 200 245M205 235 215 262M160 268 190 262M172 288 200 274M190 305 208 285M212 314 218 290M226 300 220 280M74 368 140 375M100 323 160 372M150 330 185 375M195 345 205 385M225 375 220 400M250 395 235 405M160 415 190 402M180 430 205 412M200 448 215 425M222 460 232 425M245 470 238 440"/>
      <path d="M202 132h20M202 148h20M202 164h20M238 210h14M238 228h14M238 242h14M238 278h14M238 296h14M282 96 292 118M297 95 304 120M315 98 314 128M332 105 324 132M345 118 334 140M352 108h20M352 122h20M352 136h20M397 108h14M397 122h14M397 136h14M274 172h35M274 191h65M274 210h75M274 228h80M280 290 300 300M285 272 305 300M305 268 312 302M325 274 328 305M345 285 342 315M365 298 355 320M385 312 370 330M300 390 340 425M325 386 355 425M350 390 370 430M375 400 385 435M405 425 400 450M428 440 415 455M450 455 425 465M345 465 370 455M358 480 380 465M385 488 390 465M420 482 410 465"/>
      <path d="M448 182h30M448 202h40M448 220h35M448 240h22M516 165h15M516 182h15M516 222h15M516 242h15M551 165h22M551 185h26M551 203h26M551 221h26M551 240h20M622 160h25M622 178h30M622 197h30M622 216h30M622 236h22M681 202h18M681 220h18M448 282h30M448 301h40M448 320h50M448 340h50M448 358h50M551 290h28M551 309h32M551 328h32M551 347h32M551 365h24M622 290h25M622 310h30M622 330h30M622 350h22M681 275h18M681 295h22M681 315h22M681 335h22M681 355h16M727 275h18M727 295h22M727 315h22M727 335h22M727 355h16M466 403h30M466 422h70M466 440h75M610 445h20M610 462h16M740 432 780 450M740 455 780 472M790 440 810 455M845 400h12M845 415h14M845 455h20M845 470h18M680 420 718 408"/>
    </g>
    <g fill="none" stroke="#f01010" stroke-width="7" stroke-dasharray="8 3">
      <path d="M95 128Q125 125 165 150M195 255Q225 265 222 290 210 300 195 280M190 385Q250 400 235 430 215 435 200 410M285 115Q310 118 330 138M300 315Q320 300 350 315L390 330M360 455Q375 480 400 470M358 343 440 372M640 427h50M204 100h11M250 125h12M248 155h16M212 150h20M214 160h18M246 235h14M245 295h14M362 125h22M362 134h16M405 125h18M455 112h26M480 150h12M490 180v35M496 215h14M525 125h12M556 103h16M580 165v70M585 200h8M530 175v15M530 225v18M632 115h14M655 165v65M640 220h18M688 113h15M685 155h14M700 200v28M428 247h11M733 240h9M484 285v10M492 300v70M590 290v70M655 290v60M708 275v80M755 275v80M498 402v8M540 420h6M570 460v6M632 440v28M743 397h14M774 398h13M800 400h12M828 396h8M852 405h14M895 414h12M860 465h20M888 460v8M310 172h8M335 190h8M350 210h8M148 230h8M150 370h8"/>
    </g>
    <g class="maptext"><text x="166" y="260">Z-3</text><text x="168" y="395">Z-C</text><text x="360" y="237">Y-9</text><text x="500" y="343" font-size="17">Y-8</text><text x="586" y="333" font-size="15">9-7</text><text x="545" y="447" font-size="17">Y-10</text><text x="782" y="473">Z-2</text><text x="310" y="316" font-size="14">7-7</text><text x="366" y="463" font-size="14">Z-5-1</text></g>
  </svg>
</aside>
</main>

<div class="taskbar">
  <svg class="t-left" viewBox="0 0 150 40"><path d="M15 14.300 22 13.300V19.500H15zM23 13.200 32 12V19.500H23zM15 20.500H22V26.700L15 25.700zM23 20.500H32V28L23 26.800z" fill="#fff"/><g fill="none" stroke="#fff" stroke-width="1.300"><circle cx="74.500" cy="17.500" r="5.500"/><path d="M70.500 21.500 64 28"/><path d="M112.500 12v3h9v-3M112.500 28v-3h9v3M112.500 17.500h9v5h-9zM125.500 12v3M125.500 18v10"/></g><path d="M124 15.500h3v2.500h-3z" fill="#fff"/></svg>
  <div class="task"><svg class="chrome" viewBox="0 0 22 22"><circle cx="11" cy="11" r="11" fill="#4caf50"/><path d="M11 11 1.500 5.500A11 11 0 0 1 20.500 5.500z" fill="#e8443a"/><path d="M11 5.500h9.500A11 11 0 0 1 10.500 22L15.800 13.800z" fill="#fbc934"/><circle cx="11" cy="11" r="5.200" fill="#fff"/><circle cx="11" cy="11" r="4.100" fill="#4285f4"/></svg><span>projekte:hands:stec...</span></div>
  <div class="task t2"><svg class="fold" viewBox="0 0 16 20"><use href="#folder"/></svg><span>Dokumentation &amp; ...</span></div>
  <div class="task t3"><svg class="fold" viewBox="0 0 16 20"><use href="#folder"/></svg><span>Screenshots</span></div>
  <div class="task active"><svg class="slogo" viewBox="0 0 190 164"><use href="#logo"/></svg><span>Slicer for Fusion 36...</span></div>
  <div class="tray">
    <svg viewBox="0 0 130 40" width="130" height="40"><g fill="none" stroke="#fff" stroke-width="1.200"><circle cx="15" cy="15" r="2.800"/><path d="M11 22q0-4 4-4t5 4"/><circle cx="9" cy="20" r="2.800"/><path d="M5 27q0-4 4-4t4 4"/><path d="M43 22.500 48.500 17 54 22.500"/><path d="M69 14.500h11.500v8H68.500v-4M74.500 22.500v3.500M70 26.500h9M65.500 13.500h4v4h-4zM67.500 17.500v9"/><path d="M88.500 17.500h3l4-4v13l-4-4h-3zM98 17.500q1.500 2.500 0 5M100.500 15.500q3 4.500 0 9"/><path d="M103 13.500q4.500 6.500 0 13" stroke="#777"/></g><path d="M117 13l4 2.500-4 2.500-4-2.500zM125 13l4 2.500-4 2.500-4-2.500zM117 18.500l4 2.500-4 2.500-4-2.500zM121 23l3 2-3 2-4-2z" fill="#fff"/><circle cx="124" cy="23.500" r="5" fill="#1a73f0"/><path d="M121.500 23q2-3 4.500-1M126.500 24q-2 3-4.500 1" fill="none" stroke="#fff"/></svg>
    <span class="lang">DEU</span>
    <span class="clock">14:28<br>09.06.2019</span>
    <svg viewBox="0 0 16 16" width="16" height="16"><path d="M0 0h16v13H10.500L8 16 5.500 13H0z" fill="#fff"/><path d="M3 3.500h10M3 6.500h10M3 9.500h7" stroke="#111"/></svg>
    <i></i>
  </div>
</div>
</body>
</html>
```

FILE: styles.css
```css
* { box-sizing: border-box; }
body { margin: 0; width: 1920px; height: 1200px; overflow: hidden; display: flex; flex-direction: column; font-family: "Liberation Sans", Arial, sans-serif; font-size: 11px; color: #4f4f4f; background: #efefef; }
button { font: inherit; color: inherit; padding: 0; margin: 0; }
svg { display: block; }
.defs { position: absolute; }

.titlebar { height: 23px; flex: none; background: #fff; display: flex; align-items: center; font: 12px "Open Sans", "Noto Sans", sans-serif; color: #999; }
.tb-logo { width: 16px; height: 14px; margin-left: 2px; }
.tb-title { margin-left: 5px; letter-spacing: -.38px; }
.tb-ctl { width: 130px; height: 23px; margin-left: auto; }

.header { height: 57px; flex: none; background: #0d3568; display: flex; align-items: center; color: #fff; }
.logo { width: 64px; height: 55px; margin-left: 8px; }
.brand { margin-left: 4px; margin-top: -2px; width: 91px; display: flex; flex-direction: column; font-family: "Open Sans", "Noto Sans", sans-serif; }
.brand b { font-size: 22px; line-height: 23px; font-weight: 600; letter-spacing: 3.400px; }
.brand span { font-size: 9.500px; line-height: 13px; letter-spacing: 1.150px; white-space: nowrap; color: #e3e8f0; }
.h-drop { width: 14px; height: 14px; margin-left: 11px; margin-top: -5px; }
.h-undo { width: 68px; height: 16px; margin-left: 36px; margin-top: -5px; }
.h-right { margin-left: auto; margin-right: 11px; margin-top: -2px; display: flex; align-items: center; font-size: 12px; letter-spacing: .1px; }
.h-right i { width: 1px; height: 31px; background: #fff; margin: 0 12px 0 11px; }

.main { height: 1080px; flex: none; display: flex; }
.side { width: 200px; background: #efefef; }
.sec { border-bottom: 1px solid #bdbdbd; padding-left: 10px; background: linear-gradient(#fafafa, #efefef 32px); }
.s-model { height: 71px; }
.s-manu { height: 70px; }
.s-size { height: 225px; }
.s-tech { height: 70px; }
.s-dist { height: 265px; }
h2 { margin: 0; font-size: 12px; font-weight: 400; letter-spacing: .14px; }
.head { padding-top: 5px; width: 180px; height: 35px; display: flex; align-items: center; justify-content: space-between; }
.s-model .head { height: 34px; padding-top: 4px; }
.line { margin-top: 5px; width: 180px; display: flex; align-items: center; justify-content: space-between; height: 20px; }
.ib, .btn { border: 1px solid #c3c3c3; border-bottom: 2px solid #a5a5a5; border-radius: 3px; background: linear-gradient(#eee, #c6c6c6); }
.ib { width: 30px; height: 30px; display: flex; align-items: center; justify-content: center; }
.ib svg { width: 20px; height: 18px; }
.ib.low { height: 20px; }
.ib.low svg { height: 14px; }
.ib.sq { width: 20px; height: 20px; }
.ib.sq svg { width: 14px; height: 14px; }
.btn.wide { width: 140px; height: 20px; line-height: 18px; letter-spacing: -.1px; }
.select { position: relative; height: 20px; line-height: 21px; padding-left: 9px; border: solid #b5b5b5; border-width: 0 1px 2px; border-bottom-color: #777; border-radius: 2px 2px 4px 4px; background: linear-gradient(#f0f0f0, #c9c9c9); letter-spacing: -.15px; }
.select::after { content: ""; position: absolute; right: 5px; top: 6px; border: 5.500px solid transparent; border-top: 8px solid #5a5a5a; border-bottom: 0; }
.s155 { width: 155px; } .s180 { width: 180px; } .s105 { width: 105px; } .s95 { width: 95px; } .s70 { width: 70px; } .s100 { width: 100px; }
.units, .field { display: grid; grid-template-columns: 30px 60px 67px 3px 15px; align-items: center; }
.units { height: 20px; margin-bottom: 10px; grid-template-columns: 30px 60px 70px; }
.field { height: 40px; }
.fi { width: 18px; height: 16px; margin-left: 3px; }
.units .fi { height: 12px; }
.fi.tall { height: 20px; }
.fi.axis { width: 20px; margin-left: 0; height: 18px; }
label { letter-spacing: -.17px; line-height: 14px; }
.input { height: 20px; line-height: 22px; padding-left: 10px; border-radius: 3px; background: #dcdcdc; box-shadow: inset 2px 2px 3px #8a8a8a, inset 0 -1px 0 #f2f2f2; }
.spin { grid-column: 5; height: 30px; border: 1px solid #b5b5b5; border-bottom-color: #a0a0a0; border-radius: 4px; display: flex; flex-direction: column; align-items: center; justify-content: space-between; padding: 4px 0; background: linear-gradient(#f1f1f1 0 48%, #8f8f8f 48% 52%, #ececec 52%, #ccc); }
.spin i { border: 4px solid transparent; border-bottom: 6px solid #555; border-top: 0; }
.spin b { border: 4px solid transparent; border-top: 6px solid #555; border-bottom: 0; }
.radios { height: 40px; display: flex; align-items: center; white-space: nowrap; }
.radio { width: 13px; height: 13px; border: 1px solid #b0b0b0; border-radius: 50%; background: linear-gradient(#f5f5f5, #ccc); margin-right: 6px; }
.radios .radio.on { margin-left: 11px; background: radial-gradient(circle, #444 0 2.700px, #ddd 3.500px); }
.method { justify-content: flex-start; }
.method label { width: 55px; }
.field.first { margin-top: 5px; }
.field.plain { grid-template-columns: 90px 67px 3px 15px; }
.field.plain label { margin-top: -10px; }
.field.plain .spin { grid-column: 4; }
.relief { height: 30px; display: flex; align-items: center; }
.relief label { width: 68px; }
.nav { height: 40px; padding-right: 10px; display: flex; align-items: center; justify-content: space-between; }
.nav.on { background: #e6e6e6; box-shadow: inset 0 2px 4px #777, inset 0 0 3px #aaa; border-bottom-color: #e0e0e0; }
.nav.on .ib { background: #e6e8ea; border: 1px solid #3aa7ea; border-top: 2px solid #556775; box-shadow: inset 1px 2px 3px #aab; }

.work { width: 1406px; display: flex; flex-direction: column; }
.view { position: relative; height: 1030px; background: #c5ccd6; }
.scene { width: 1406px; height: 1030px; }
.cubetext { font-family: "Open Sans", sans-serif; font-weight: 700; fill: #555b66; }
.status { position: absolute; right: 15px; bottom: 12px; display: flex; flex-direction: column; align-items: flex-end; color: #858585; }
.status span { font-size: 12px; line-height: 16px; }
.status strong { font-weight: 400; font-size: 24px; line-height: 36px; letter-spacing: .15px; }
.controls { height: 50px; border-top: 1px solid #a8a8a8; border-bottom: 1px solid #999; background: linear-gradient(#dcdcdc 0 28px, #d4d4d4 34px, #c6c6c6); display: flex; padding: 14px 0 0 238px; }
.controls .select { background: linear-gradient(#e4e4e4, #bcbcbc); }
.track { position: relative; width: 698px; height: 20px; margin: 0 21px; }
.tl { height: 15px; line-height: 17px; display: flex; justify-content: space-between; background: linear-gradient(#d2d2d2, #929292); border-radius: 3px 3px 0 0; color: #666; }
.rail { height: 4px; background: #555; border-top: 1px solid #222; }
.rail i { display: block; width: 491px; height: 3px; background: #1173bd; border-bottom: 1px solid #5aa5dc; }
.thumb { position: absolute; left: 485px; top: 10px; width: 13px; height: 11px; }
.prev, .next { width: 35px; }
.next { margin-left: 20px; background: #dde8f0; border: 1px solid #35aaf2; border-top: 2px solid #556775; box-shadow: inset 1px 1px 3px #99a; }
.prev svg, .next svg { width: 14px; }

.gutter { width: 7px; background: linear-gradient(90deg, #bac1cb, #b2b9c2 60%, #8f969f); }
.ref { width: 307px; border-right: 3px solid #b5bdc7; background: repeating-linear-gradient(135deg, #e3e8eb 0 2.400px, #d2d6dc 3.600px, #e3e8eb 4.243px); }
.ref h3 { margin: 15px 0 0; text-align: center; font-size: 12px; line-height: 18px; font-weight: 400; color: #111; padding-right: 4px; letter-spacing: .2px; }
.map { width: 296px; height: 143px; margin: 452px 0 0 6px; }
.maptext { font-family: "Liberation Sans", sans-serif; font-size: 22px; font-weight: 700; fill: #f01010; }

.taskbar { height: 40px; flex: none; background: #050b12; display: flex; color: #fff; font: 12px "Open Sans", "Noto Sans", sans-serif; letter-spacing: -.4px; }
.t-left { width: 150px; height: 40px; }
.task { width: 152px; margin-left: 1px; border-bottom: 2px solid #76b9ed; display: flex; align-items: center; white-space: nowrap; }
.t2 { margin-left: 9px; }
.t3 { margin-left: 8px; }
.task.active { width: 160px; margin-left: 5px; background: #3b3f43; }
.chrome { width: 22px; height: 22px; margin: 0 5px 0 7px; }
.fold { width: 16px; height: 20px; margin: 0 9px; }
.slogo { width: 22px; height: 20px; margin: 0 6px 0 10px; }
.tray { margin-left: auto; display: flex; align-items: center; }
.tray > svg:first-child { margin-right: 2px; }
.lang { margin-left: 7px; width: 29px; }
.clock { text-align: center; line-height: 18px; width: 66px; margin-right: 12px; }
.tray i { width: 1px; height: 40px; background: #777; margin: 0 4px 0 20px; }
```
